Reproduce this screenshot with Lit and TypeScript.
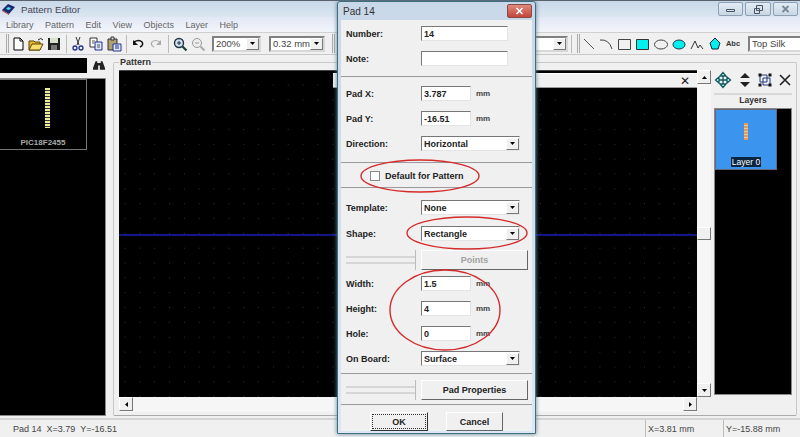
import { LitElement, html, css, svg } from 'lit';
import { customElement } from 'lit/decorators.js';

const arrow = (d: string) => html`<svg width="7" height="7" viewBox="0 0 7 7"><path d=${d} fill="#000" /></svg>`;
const DOWN = 'M1 2h5L3.5 5z';
const UP = 'M1 5h5L3.5 2z';
const LEFT = 'M5 1v5L2 3.5z';
const RIGHT = 'M2 1v5l3-2.5z';

const ICONS: Record<string, unknown> = {
  file: svg`<path d="M4 2h6l3 3v9H4z" fill="#fff" stroke="#000"/><path d="M10 2v3h3" fill="none" stroke="#000"/>`,
  open: svg`<path d="M1 14V5h5l1 1h5v8z" fill="#e8b830" stroke="#5a4500"/><path d="M1 14l3-6h11l-3 6z" fill="#f8e070" stroke="#5a4500"/><path d="M10 4q3-3 5 0" fill="none" stroke="#222"/>`,
  save: svg`<path d="M2 2h12v12H2z" fill="#222"/><path d="M4 2h8v5H4z" fill="#d8e0d0"/><path d="M5 9h6v5H5z" fill="#777"/>`,
  cut: svg`<path d="M6 1l3 8M10 1L7 9" stroke="#333" fill="none"/><circle cx="5" cy="12" r="2" fill="none" stroke="#203090" stroke-width="1.3"/><circle cx="11" cy="12" r="2" fill="none" stroke="#203090" stroke-width="1.3"/>`,
  copy: svg`<path d="M2 2h7v9H2z" fill="#fff" stroke="#333"/><path d="M7 6h7v8H7z" fill="#dfe6ff" stroke="#203090"/><path d="M4 5h3M4 7h2M9 9h3M9 11h3" stroke="#555"/>`,
  paste: svg`<path d="M2 3h9v11H2z" fill="#b0a070" stroke="#333"/><path d="M5 1h3v3H5z" fill="#ddd" stroke="#333"/><path d="M7 8h8v7H7z" fill="#dfe6ff" stroke="#203090"/><path d="M9 10h4M9 12h4" stroke="#203090"/>`,
  undo: svg`<path d="M4 6q5-3 8 0 2 3-2 5" fill="none" stroke="#111" stroke-width="1.5"/><path d="M3 4v5h5z" fill="#111"/>`,
  redo: svg`<path d="M12 6q-5-3-8 0-2 3 2 5" fill="none" stroke="#aaa" stroke-width="1.2"/><path d="M13 4v5H8z" fill="#aaa"/>`,
  zoomIn: svg`<circle cx="7" cy="7" r="4.5" fill="#cfe0f0" stroke="#234"  stroke-width="1.4"/><path d="M5 7h4M7 5v4" stroke="#234"/><path d="M10.5 10.5l4 4" stroke="#184030" stroke-width="2.2"/>`,
  zoomOut: svg`<circle cx="7" cy="7" r="4.5" fill="#eee" stroke="#999"/><path d="M5 7h4" stroke="#999"/><path d="M10.5 10.5l4 4" stroke="#aaa" stroke-width="2"/>`,
  line: svg`<path d="M3 3l10 10" stroke="#555" fill="none"/>`,
  arc: svg`<path d="M1 4q9-1 12 9" stroke="#444" fill="none"/>`,
  rect: svg`<path d="M1.5 3.5h12v10h-12z" fill="none" stroke="#444"/>`,
  rectFill: svg`<path d="M1.5 3.5h12v10h-12z" fill="#00f0f0" stroke="#333"/>`,
  ellipse: svg`<ellipse cx="8" cy="8.5" rx="6.5" ry="4.5" fill="none" stroke="#444"/>`,
  ellipseFill: svg`<ellipse cx="8" cy="8.5" rx="6" ry="4.5" fill="#00f0f0" stroke="#234"/>`,
  wave: svg`<path d="M2 13L6 5l3 7 2-3 3 4" fill="none" stroke="#333"/>`,
  poly: svg`<path d="M8 2l5 5-2 6H5L3 7z" fill="#00f0f0" stroke="#123"/>`,
};

const icon = (name: string) => html`<span class="cell"><svg width="16" height="16" viewBox="0 0 16 16">${ICONS[name]}</svg></span>`;

@customElement('app-root')
export class AppRoot extends LitElement {
  static styles = css`
    :host {
      display: flex;
      flex-direction: column;
      position: relative;
      width: 800px;
      height: 437px;
      overflow: hidden;
      background: #f0f0f0;
      font-family: 'Liberation Sans', Arial, sans-serif;
      font-size: 9.5px;
      color: #222;
    }
    .titlebar {
      height: 17px;
      flex: none;
      display: flex;
      align-items: center;
      gap: 5px;
      padding-left: 1px;
      box-sizing: border-box;
      border-top: 1px solid #59626c;
      background: linear-gradient(#c9d8e8, #dbe6f1);
      font-size: 9.7px;
      color: #445;
    }
    .winbtns {
      margin-left: auto;
      display: flex;
      gap: 2px;
      padding-right: 2px;
      align-self: flex-start;
      margin-top: 1px;
    }
    .winbtn {
      width: 23px;
      height: 12px;
      border: 1px solid #8da0b4;
      border-radius: 2px;
      background: linear-gradient(#e3ecf5, #c9d6e3);
      display: flex;
      align-items: center;
      justify-content: center;
    }
    .menubar {
      height: 15px;
      flex: none;
      display: flex;
      align-items: center;
      gap: 11.5px;
      padding-left: 6px;
      background: linear-gradient(#e2e8f5, #f3f5fb);
      color: #666;
      font-size: 9px;
    }
    .toolbar {
      height: 23px;
      flex: none;
      display: flex;
      align-items: center;
      box-sizing: border-box;
      padding-left: 6px;
      background: #f0f0f0;
      border-top: 1px solid #d0d0d0;
      border-bottom: 1px solid #c8c8c8;
    }
    .grip {
      width: 3px;
      height: 19px;
      flex: none;
      box-sizing: border-box;
      border-left: 1px solid #aaa;
      border-right: 1px solid #aaa;
    }
    .sep {
      width: 6px;
      height: 18px;
      flex: none;
      position: relative;
    }
    .sep::after {
      content: '';
      display: block;
      width: 1px;
      height: 18px;
      margin-left: 3px;
      background: #bbb;
    }
    .cell {
      width: 18px;
      height: 18px;
      flex: none;
      display: flex;
      align-items: center;
      justify-content: center;
    }
    .abc {
      font-size: 7.5px;
      font-weight: bold;
      color: #333;
    }
    .combo {
      display: flex;
      align-items: center;
      box-sizing: border-box;
      height: 16px;
      flex: none;
      background: #fff;
      border: 2px solid;
      border-color: #808080 #d8d8d8 #d8d8d8 #808080;
      padding-left: 2px;
      font-size: 9.5px;
      color: #444;
    }
    .combo .txt { flex: 1; white-space: nowrap; }
    .dropbtn {
      width: 13px;
      height: 12px;
      flex: none;
      display: flex;
      align-items: center;
      justify-content: center;
      background: #f0f0f0;
      border: 1px solid;
      border-color: #fff #777 #777 #fff;
      box-sizing: border-box;
    }
    .main {
      flex: 1;
      min-height: 0;
      display: flex;
      background: #f0f0f0;
    }
    .left {
      width: 106px;
      flex: none;
      display: flex;
      flex-direction: column;
      padding-top: 3px;
      gap: 5px;
    }
    .search {
      display: flex;
      align-items: center;
      height: 15px;
      gap: 3px;
    }
    .searchbox {
      width: 87px;
      height: 15px;
      background: #000;
      box-sizing: border-box;
    }
    .list {
      flex: 1;
      background: #000;
      border: 1px solid #8a8a8a;
      border-left: 0;
      box-sizing: border-box;
      margin-bottom: 2px;
    }
    .thumb {
      width: 87px;
      height: 71px;
      box-sizing: border-box;
      border: 1px solid #777;
      border-left: 0;
      display: flex;
      flex-direction: column;
      align-items: center;
      padding-top: 8px;
    }
    .pads {
      width: 5px;
      height: 40px;
      margin-left: 9px;
      background: repeating-linear-gradient(#eeee99 0 2px, #333 2px 3px);
    }
    .thumb .name {
      margin-top: 10px;
      font-size: 8px;
      font-weight: bold;
      color: #aaa;
    }
    .group {
      flex: 1;
      margin: 7px 3px 2px 7px;
      border: 1px solid #c8c8c8;
      border-bottom-color: #aaa;
      border-radius: 2px;
      position: relative;
      display: flex;
      padding: 7px 0 3px 5px;
      box-sizing: border-box;
    }
    .legend {
      position: absolute;
      top: -6px;
      left: 5px;
      padding: 0 1px;
      background: #f0f0f0;
      font-weight: bold;
      font-size: 9px;
      color: #333;
    }
    .center {
      flex: 1;
      display: flex;
      flex-direction: column;
      min-width: 0;
    }
    .center-row {
      flex: 1;
      display: flex;
      min-height: 0;
    }
    .canvas {
      flex: 1;
      position: relative;
      background-color: #000;
      background-image: radial-gradient(circle at center, #333 0.6px, transparent 0.9px);
      background-size: 14.85px 14.85px;
      background-position: -1.5px 6.5px;
      border-top: 1px solid #444;
    }
    .hline {
      position: absolute;
      left: 0;
      right: 0;
      top: 163px;
      height: 2px;
      background: #14148c;
    }
    .strip {
      position: absolute;
      left: 214px;
      right: 0;
      top: 2px;
      height: 15px;
      box-sizing: border-box;
      padding-right: 7px;
      background: #f0f0f0;
      border-top: 1px solid #fff;
      border-bottom: 1px solid #999;
      display: flex;
      align-items: center;
      justify-content: flex-end;
      font-size: 12px;
      color: #222;
    }
    .vscroll {
      width: 14px;
      flex: none;
      display: flex;
      flex-direction: column;
      justify-content: space-between;
      position: relative;
      background: #f6f6f6;
    }
    .hscroll {
      height: 15px;
      flex: none;
      margin-right: 14px;
      display: flex;
      justify-content: space-between;
      background: #f6f6f6;
    }
    .sbtn {
      width: 14px;
      height: 14px;
      flex: none;
      box-sizing: border-box;
      border: 1px solid;
      border-color: #fff #777 #777 #fff;
      background: #f0f0f0;
      display: flex;
      align-items: center;
      justify-content: center;
    }
    .vthumb {
      position: absolute;
      top: 157px;
      left: 0;
      width: 14px;
      height: 13px;
      box-sizing: border-box;
      background: #f0f0f0;
      border: 1px solid;
      border-color: #fff #777 #777 #fff;
    }
    .right {
      width: 80px;
      flex: none;
      margin-left: 3px;
      margin-right: 2px;
      display: flex;
      flex-direction: column;
      margin-top: -1px;
    }
    .rtools {
      display: flex;
      justify-content: space-between;
      align-items: center;
      height: 22px;
      padding-right: 3px;
    }
    .rtools svg { display: block; }
    .rhead {
      height: 12px;
      margin-top: 2px;
      margin-right: 2px;
      box-sizing: border-box;
      border-top: 2px solid #d8d8d8;
      text-align: center;
      font-weight: bold;
      font-size: 8.5px;
      line-height: 10px;
      color: #333;
    }
    .rlist {
      flex: 1;
      margin: 3px 2px 17px 0;
      background: #000;
      border: 1px solid #888;
      box-sizing: border-box;
    }
    .lthumb {
      width: 62px;
      height: 61px;
      box-sizing: border-box;
      background: #3b94ee;
      border: 1px solid #667;
      display: flex;
      flex-direction: column;
      align-items: center;
      padding-top: 13px;
    }
    .lpad {
      width: 4px;
      height: 17px;
      background: repeating-linear-gradient(#e89858 0 2px, #f0c8a0 2px 3px);
    }
    .lname {
      margin-top: 17px;
      padding: 0 1px;
      background: #0a2540;
      color: #fff;
      font-size: 8.5px;
      line-height: 10px;
    }
    .status {
      height: 19px;
      flex: none;
      display: flex;
      align-items: center;
      box-sizing: border-box;
      border-top: 2px solid #d4d4d4;
      padding-left: 13px;
      font-size: 9px;
      color: #444;
    }
    .status .info {
      flex: 1;
    }
    .status .xy {
      align-self: stretch;
      display: flex;
      align-items: center;
      padding-left: 2px;
      box-sizing: border-box;
      border-left: 1px solid #bbb;
    }
    .dialog {
      position: absolute;
      left: 337px;
      top: 1px;
      width: 199px;
      height: 433px;
      box-sizing: border-box;
      border: 1px solid #3f6e80;
      border-radius: 3px 3px 0 0;
      background: linear-gradient(#c8d8e8, #dbe8f3);
      padding: 0 3px 3px;
      display: flex;
      flex-direction: column;
      box-shadow: 0 0 4px #5b7c90;
    }
    .dtitle {
      height: 18px;
      flex: none;
      display: flex;
      align-items: center;
      justify-content: space-between;
      font-size: 10px;
      color: #333;
      padding-left: 2px;
    }
    .dclose {
      width: 23px;
      height: 12px;
      border: 1px solid #8a4a44;
      border-radius: 2px;
      background: linear-gradient(#e08a7c, #c4453a);
      display: flex;
      align-items: center;
      justify-content: center;
    }
    .dbody {
      flex: 1;
      display: flex;
      flex-direction: column;
      background: #f0f0f0;
      font-weight: bold;
      font-size: 9px;
      color: #222;
    }
    .section {
      display: flex;
      flex-direction: column;
      gap: 10px;
      padding: 6px 0 0 5px;
      box-sizing: border-box;
      border-bottom: 2px groove #eee;
    }
    .s1 { height: 58px; }
    .s2 { height: 86px; padding-top: 8px; }
    .s3 {
      height: 25px;
      padding: 0 0 0 29px;
      flex-direction: row;
      align-items: center;
      gap: 5px;
    }
    .s4 { height: 186px; padding-top: 11px; }
    .s5 {
      height: 31px;
      padding: 5px 0 0 5px;
      flex-direction: row;
      gap: 0;
    }
    .row {
      display: flex;
      align-items: center;
      height: 15px;
      flex: none;
    }
    .row label { width: 75px; flex: none; }
    .shape { margin-top: 1px; }
    .field {
      height: 15px;
      box-sizing: border-box;
      background: #fff;
      border: 1px solid;
      border-color: #777 #e4e4e4 #e4e4e4 #777;
      display: flex;
      align-items: center;
      padding-left: 2px;
      flex: none;
    }
    .num { width: 87px; }
    .short { width: 50px; }
    .sel { width: 99px; }
    .sel .txt { flex: 1; }
    .unit {
      margin-left: 5px;
      font-size: 8px;
      color: #444;
    }
    .slot {
      width: 70px;
      height: 20px;
      flex: none;
      box-sizing: border-box;
      border-right: 1px solid #bbb;
      display: flex;
      flex-direction: column;
      justify-content: center;
      gap: 4px;
    }
    .slot i {
      display: block;
      height: 2px;
      background: #d6d6d6;
    }
    .btnrow {
      display: flex;
      height: 20px;
      flex: none;
      margin-top: -1px;
      margin-bottom: -4px;
    }
    .btn {
      box-sizing: border-box;
      display: flex;
      align-items: center;
      justify-content: center;
      background: #f0f0f0;
      border: 1px solid;
      border-color: #fff #666 #666 #fff;
      flex: none;
    }
    .wide {
      width: 107px;
      height: 20px;
      margin-left: 5px;
    }
    .disabled { color: #a0a0a0; }
    .check {
      width: 10px;
      height: 10px;
      box-sizing: border-box;
      background: #fff;
      border: 1px solid #8a8a8a;
    }
    .actions {
      display: flex;
      padding: 6px 0 0 29px;
      gap: 18px;
    }
    .dlgbtn {
      height: 19px;
    }
    .ok {
      width: 58px;
      outline: 1px dotted #333;
      outline-offset: -3px;
      border-color: #fff #333 #333 #fff;
    }
    .cancel { width: 57px; }
    .marks {
      position: absolute;
      left: 0;
      top: 0;
      pointer-events: none;
    }
  `;

  private select(text: string) {
    return html`<div class="field sel"><span class="txt">${text}</span><span class="dropbtn">${arrow(DOWN)}</span></div>`;
  }

  private field(label: string, value: string, unit = true) {
    return html`<div class="row">
      <label>${label}</label>
      <div class="field ${unit ? 'short' : 'num'}">${value}</div>
      ${unit ? html`<span class="unit">mm</span>` : ''}
    </div>`;
  }

  private selectRow(label: string, value: string, cls = '') {
    return html`<div class="row ${cls}"><label>${label}</label>${this.select(value)}</div>`;
  }

  private toolbar() {
    return html`<div class="toolbar">
      <span class="grip"></span>
      ${icon('file')}${icon('open')}${icon('save')}
      <span class="sep"></span>
      ${icon('cut')}${icon('copy')}${icon('paste')}
      <span class="sep"></span>
      ${icon('undo')}${icon('redo')}
      <span class="sep"></span>
      ${icon('zoomIn')}${icon('zoomOut')}
      <div class="combo" style="width:49px;margin-left:5px"><span class="txt">200%</span><span class="dropbtn">${arrow(DOWN)}</span></div>
      <div class="combo" style="width:56px;margin-left:8px"><span class="txt">0.32 mm</span><span class="dropbtn">${arrow(DOWN)}</span></div>
      <span class="grip" style="margin-left:7px"></span>
      <div class="combo" style="width:228px;margin-left:5px"><span class="txt"></span><span class="dropbtn">${arrow(DOWN)}</span></div>
      <span class="sep" style="width:9px"></span>
      <span class="grip"></span>
      <span style="width:2px"></span>
      ${icon('line')}${icon('arc')}${icon('rect')}${icon('rectFill')}${icon('ellipse')}${icon('ellipseFill')}${icon('wave')}${icon('poly')}
      <span class="cell abc">Abc</span>
      <div class="combo" style="width:60px;margin-left:6px;border-right:0">Top Silk</div>
    </div>`;
  }

  private dialog() {
    return html`<div class="dialog">
      <div class="dtitle">
        <span>Pad 14</span>
        <span class="dclose">
          <svg width="9" height="8" viewBox="0 0 9 8"><path d="M1.5 1l6 6M7.5 1l-6 6" stroke="#fff" stroke-width="1.6" /></svg>
        </span>
      </div>
      <div class="dbody">
        <div class="section s1">
          ${this.field('Number:', '14', false)}
          ${this.field('Note:', '', false)}
        </div>
        <div class="section s2">
          ${this.field('Pad X:', '3.787')}
          ${this.field('Pad Y:', '-16.51')}
          ${this.selectRow('Direction:', 'Horizontal')}
        </div>
        <div class="section s3"><span class="check"></span><span>Default for Pattern</span></div>
        <div class="section s4">
          ${this.selectRow('Template:', 'None')}
          ${this.selectRow('Shape:', 'Rectangle', 'shape')}
          <div class="btnrow">
            <div class="slot"><i></i><i></i></div>
            <div class="btn wide disabled">Points</div>
          </div>
          ${this.field('Width:', '1.5')}
          ${this.field('Height:', '4')}
          ${this.field('Hole:', '0')}
          ${this.selectRow('On Board:', 'Surface')}
        </div>
        <div class="section s5">
          <div class="slot"><i></i><i></i></div>
          <div class="btn wide">Pad Properties</div>
        </div>
        <div class="actions">
          <div class="btn dlgbtn ok">OK</div>
          <div class="btn dlgbtn cancel">Cancel</div>
        </div>
      </div>
    </div>`;
  }

  render() {
    return html`
      <div class="titlebar">
        <svg width="15" height="13" viewBox="0 0 15 13">
          <path d="M1 7l6-6 7 3-6 7z" fill="#1a2a70" />
          <path d="M5 6l2-2 3 1-2 2z" fill="#50e0f0" />
          <path d="M1 7l7 4v1L1 8z" fill="#c04040" />
        </svg>
        <span>Pattern Editor</span>
        <div class="winbtns">
          <span class="winbtn"><svg width="11" height="7" viewBox="0 0 11 7"><path d="M1.5 3.5h8v2h-8z" fill="#dde" stroke="#456" /></svg></span>
          <span class="winbtn" style="width:24px"><svg width="11" height="9" viewBox="0 0 11 9"><path d="M3.5.5h6v5h-6zM1.5 3.5h5v5h-5z" fill="#dde" stroke="#456" /></svg></span>
          <span class="winbtn"><svg width="9" height="8" viewBox="0 0 9 8"><path d="M1.5 1l6 6M7.5 1l-6 6" stroke="#789" stroke-width="1.8" /></svg></span>
        </div>
      </div>
      <div class="menubar">
        <span>Library</span><span>Pattern</span><span>Edit</span><span>View</span><span>Objects</span><span>Layer</span><span>Help</span>
      </div>
      ${this.toolbar()}
      <div class="main">
        <div class="left">
          <div class="search">
            <div class="searchbox"></div>
            <svg width="12" height="11" viewBox="0 0 14 12" style="margin-left:3px">
              <path d="M3 1h2v2h4V1h2l3 8v2H8V6H6v5H0V9z" fill="#222" />
            </svg>
          </div>
          <div class="list">
            <div class="thumb"><div class="pads"></div><span class="name">PIC18F2455</span></div>
          </div>
        </div>
        <div class="group">
          <span class="legend">Pattern</span>
          <div class="center">
            <div class="center-row">
              <div class="canvas">
                <div class="hline"></div>
                <div class="strip">✕</div>
              </div>
              <div class="vscroll">
                <span class="sbtn">${arrow(UP)}</span>
                <span class="vthumb"></span>
                <span class="sbtn">${arrow(DOWN)}</span>
              </div>
            </div>
            <div class="hscroll">
              <span class="sbtn">${arrow(LEFT)}</span>
              <span class="sbtn">${arrow(RIGHT)}</span>
            </div>
          </div>
          <div class="right">
            <div class="rtools">
              <svg width="18" height="18" viewBox="0 0 18 18" fill="none" stroke="#0f5a60" stroke-width="1.3">
                <path d="M9 2v14M2 9h14" />
                <path d="M6 5l3-3.5L12 5zM6 13l3 3.5 3-3.5zM5 6L1.5 9 5 12zM13 6l3.5 3-3.5 3z" fill="#d8f0f0" />
              </svg>
              <svg width="14" height="18" viewBox="0 0 14 18">
                <path d="M7 2l5 5H2zM7 16l5-5H2z" fill="#222" />
              </svg>
              <svg width="16" height="16" viewBox="0 0 16 16">
                <path d="M3 3h7v7H3zM6 6h7v7H6z" fill="none" stroke="#223a80" />
                <path d="M1.5 1.5h3v3h-3zM11.5 1.5h3v3h-3zM1.5 11.5h3v3h-3zM11.5 11.5h3v3h-3z" fill="#111" />
              </svg>
              <svg width="12" height="12" viewBox="0 0 12 12"><path d="M1 1l10 10M11 1L1 11" stroke="#222" stroke-width="1.6" /></svg>
            </div>
            <div class="rhead">Layers</div>
            <div class="rlist">
              <div class="lthumb"><div class="lpad"></div><span class="lname">Layer 0</span></div>
            </div>
          </div>
        </div>
      </div>
      <div class="status">
        <span class="info">Pad 14&nbsp; X=3.79&nbsp; Y=-16.51</span>
        <span class="xy" style="width:78px">X=3.81 mm</span>
        <span class="xy" style="width:77px">Y=-15.88 mm</span>
      </div>
      ${this.dialog()}
      <svg class="marks" width="800" height="437" viewBox="0 0 800 437">
        <g fill="none" stroke="#d42c2c" stroke-width="1.4">
          <ellipse cx="420" cy="176" rx="59" ry="16" />
          <ellipse cx="467" cy="233" rx="60" ry="16" />
          <ellipse cx="445" cy="310" rx="55" ry="40" />
        </g>
      </svg>
    `;
  }
}
